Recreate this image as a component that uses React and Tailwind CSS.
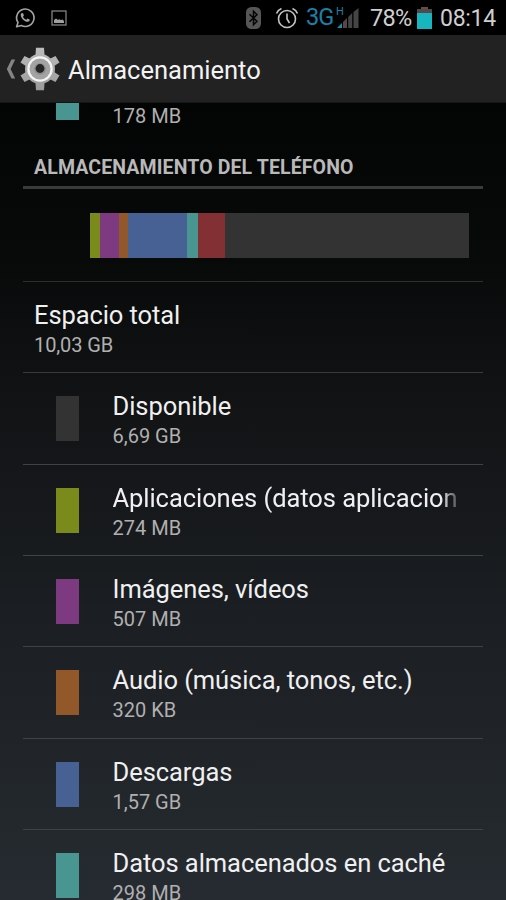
import React from 'react'

const categories = [
  { name: 'Disponible', size: '6,69 GB', color: 'bg-[#333333]' },
  { name: 'Aplicaciones (datos aplicacion', size: '274 MB', color: 'bg-[#7b8b1b]', fade: true },
  { name: 'Imágenes, vídeos', size: '507 MB', color: 'bg-[#7d3a80]' },
  { name: 'Audio (música, tonos, etc.)', size: '320 KB', color: 'bg-[#935829]' },
  { name: 'Descargas', size: '1,57 GB', color: 'bg-[#486195]' },
  { name: 'Datos almacenados en caché', size: '298 MB', color: 'bg-[#499591]' },
]

const segments = [
  { width: 10, color: 'bg-[#7b8b1b]' },
  { width: 19, color: 'bg-[#7d3a80]' },
  { width: 9, color: 'bg-[#935829]' },
  { width: 59, color: 'bg-[#486195]' },
  { width: 11, color: 'bg-[#499591]' },
  { width: 27, color: 'bg-[#823033]' },
]

const WhatsappIcon = () => (
  <svg width="22" height="22" viewBox="0 0 22 22" fill="none" stroke="#a3a3a3" strokeWidth="1.6">
    <path d="M2.6 19.8l1.4-4.300a8.700 8.700 0 1 1 3.300 3z" strokeLinejoin="round" />
    <path
      d="M8.100 6.100c-.9.3-1.500 1.100-1.300 2.300.5 3 3.600 6 6.800 6.400 1.300.1 2.300-.8 2.200-2l-2.300-1.200-1.200 1.200c-1.600-.6-2.700-1.700-3.300-3.100l.9-1.100-.8-2.400z"
      fill="#a3a3a3"
      stroke="none"
    />
  </svg>
)

const PictureIcon = () => (
  <svg width="16" height="16" viewBox="0 0 16 16">
    <rect x="1" y="1" width="14" height="14" fill="none" stroke="#8c8c8c" strokeWidth="1.2" />
    <path d="M3 13v-3l2-1.500 2 1.500 1-.8 2 .8 1.500-.5L13 11v2z" fill="#a0a0a0" />
  </svg>
)

const BluetoothIcon = () => (
  <svg width="15" height="22" viewBox="0 0 15 22">
    <rect x="0" y="0" width="15" height="22" rx="5.5" fill="#565656" />
    <path d="M3.5 7.300l7.500 7-3.500 3.400V4.300L11 7.700l-7.500 7" fill="none" stroke="#050505" strokeWidth="1.5" />
  </svg>
)

const AlarmIcon = () => (
  <svg width="24" height="22" viewBox="0 0 24 22" fill="none" stroke="#c4c4c4" strokeWidth="1.6">
    <circle cx="12" cy="12" r="8.5" />
    <path d="M12 6.500V12l2.500 4M1.500 6.500C2.500 4 4 2.500 6.500 1.500M22.500 6.500C21.500 4 20 2.500 17.500 1.500" />
  </svg>
)

const SignalIcon = () => (
  <svg width="22" height="21" viewBox="0 0 22 21">
    <path d="M0 20l5-5v5z" fill="#168db0" />
    <path d="M6 14l4-4v10H6z" fill="#54474a" />
    <path d="M11.200 9l4-4v15h-4z" fill="#454545" />
    <path d="M16.500 4L21.500 0v20h-5z" fill="#454545" />
  </svg>
)

const GearIcon = () => (
  <svg width="40" height="44" viewBox="0 0 40 44">
    <defs>
      <linearGradient id="gear" gradientUnits="userSpaceOnUse" x1="0" y1="0" x2="0" y2="44">
        <stop offset="0" stopColor="#bdbdbd" />
        <stop offset="1" stopColor="#9a9a9a" />
      </linearGradient>
    </defs>
    <g fill="url(#gear)">
      <circle cx="20" cy="22" r="15" />
      <path d="M16 .8h8l.6 8h-9.200z" />
      <path d="M16 43.200h8l.6-8h-9.200z" />
      <path d="M.5 15.500L4.500 9l8 4-5 7z" />
      <path d="M39.500 15.500L35.500 9l-8 4 5 7z" />
      <path d="M.5 28.500L4.500 35l8-4-5-7z" />
      <path d="M39.500 28.500L35.500 35l-8-4 5-7z" />
    </g>
    <circle cx="20" cy="22" r="11.600" fill="#a3a3a3" stroke="#f4f4f4" strokeWidth="2.300" />
    <circle cx="20" cy="22" r="5.800" fill="#8b8b8b" />
    <circle cx="20" cy="21.500" r="4.400" fill="#252525" />
  </svg>
)

const StatusBar = () => (
  <div className="flex h-[35px] shrink-0 items-center bg-black pl-[14px]">
    <WhatsappIcon />
    <div className="ml-[15px]">
      <PictureIcon />
    </div>
    <div className="ml-[179px]">
      <BluetoothIcon />
    </div>
    <div className="ml-[14px] mt-px">
      <AlarmIcon />
    </div>
    <span className="ml-[7px] w-[30px] text-[23.5px] leading-none tracking-[-0.9px] text-[#1b80a8]">3G</span>
    <div className="relative ml-px mt-px">
      <SignalIcon />
      <span className="absolute -left-px -top-[2px] text-[11px] leading-none text-[#1b80a8]">H</span>
    </div>
    <span className="ml-[11px] mt-[2px] w-[42px] text-[23.5px] leading-none tracking-[-0.7px] text-[#cfcfcf]">78%</span>
    <div className="ml-[5px] mt-px flex flex-col items-center">
      <div className="h-[2px] w-[7px] bg-[#6b4a4c]" />
      <div className="h-[4px] w-[15px] bg-[#54494a]" />
      <div className="h-[16px] w-[15px] bg-[#16b5c0]" />
    </div>
    <span className="ml-[8px] mt-[2px] text-[23px] leading-none tracking-[-0.3px] text-[#cfcfcf]">08:14</span>
  </div>
)

const Header = () => (
  <div className="flex h-[68px] shrink-0 items-center border-b border-[#161616] bg-[#222222] pl-[6px]">
    <svg width="10" height="22" viewBox="0 0 10 22" fill="#858585">
      <path d="M5.500 1.500H9.200L4.600 11l4.600 9.500H5.500L.8 11z" />
    </svg>
    <div className="ml-[4px]">
      <GearIcon />
    </div>
    <h1 className="ml-[8px] mt-[2px] whitespace-nowrap text-[25.5px] leading-[30px] text-[#f3f3f3]">Almacenamiento</h1>
  </div>
)

const CategoryRow = ({ item }) => (
  <div className="flex h-[91.33px] shrink-0 border-b border-[#3f4346] pl-[33px]">
    <div className={`mt-[23px] h-[45px] w-[23px] shrink-0 ${item.color}`} />
    <div className="ml-[33.5px] w-[345px] pt-[18px]">
      <div
        className={`whitespace-nowrap text-[25.5px] leading-[30px] tracking-[-0.06px] text-[#f0f0f0] ${
          item.fade ? '[mask-image:linear-gradient(to_right,black_328px,transparent_350px)]' : ''
        }`}
      >
        {item.name}
      </div>
      <div className="pt-px text-[20px] leading-[29px] text-[#b0b0b0]">{item.size}</div>
    </div>
  </div>
)

const App = () => {
  return (
    <div className="flex h-[900px] w-[506px] flex-col overflow-hidden bg-black font-['Roboto',sans-serif]">
      <StatusBar />
      <Header />
      <div className="flex min-h-0 flex-1 flex-col overflow-hidden bg-[linear-gradient(to_bottom,#030404_0%,#080a0a_20%,#121416_40%,#1b1e22_64%,#23282c_90%,#262b32_100%)] px-[23px]">
        <div className="flex h-[44px] shrink-0 pl-[33px]">
          <div className="h-[17px] w-[23px] bg-[#499591]" />
          <div className="ml-[33.5px] text-[20px] leading-[26px] text-[#b0b0b0]">178 MB</div>
        </div>

        <div className="h-[42px] shrink-0 border-b-3 border-[#393b3b] pl-[11px] text-[19.5px] font-bold leading-[42px] tracking-[0.12px] text-[#b9b9b9]">
          ALMACENAMIENTO DEL TELÉFONO
        </div>

        <div className="h-[93px] shrink-0 border-b border-[#2c2f30] pl-[67px] pr-[14px] pt-[24px]">
          <div className="flex h-[45px] bg-[#333333]">
            {segments.map((segment, index) => (
              <div key={index} className={segment.color} style={{ width: segment.width }} />
            ))}
          </div>
        </div>

        <div className="h-[91.33px] shrink-0 border-b border-[#393c3e] pl-[11px] pt-[18px]">
          <div className="text-[25.5px] leading-[30px] tracking-[-0.1px] text-[#f0f0f0]">Espacio total</div>
          <div className="pt-px text-[20px] leading-[29px] tracking-[-0.1px] text-[#b0b0b0]">10,03 GB</div>
        </div>

        {categories.map((item, index) => (
          <CategoryRow key={index} item={item} />
        ))}
      </div>
    </div>
  )
}

export default App
